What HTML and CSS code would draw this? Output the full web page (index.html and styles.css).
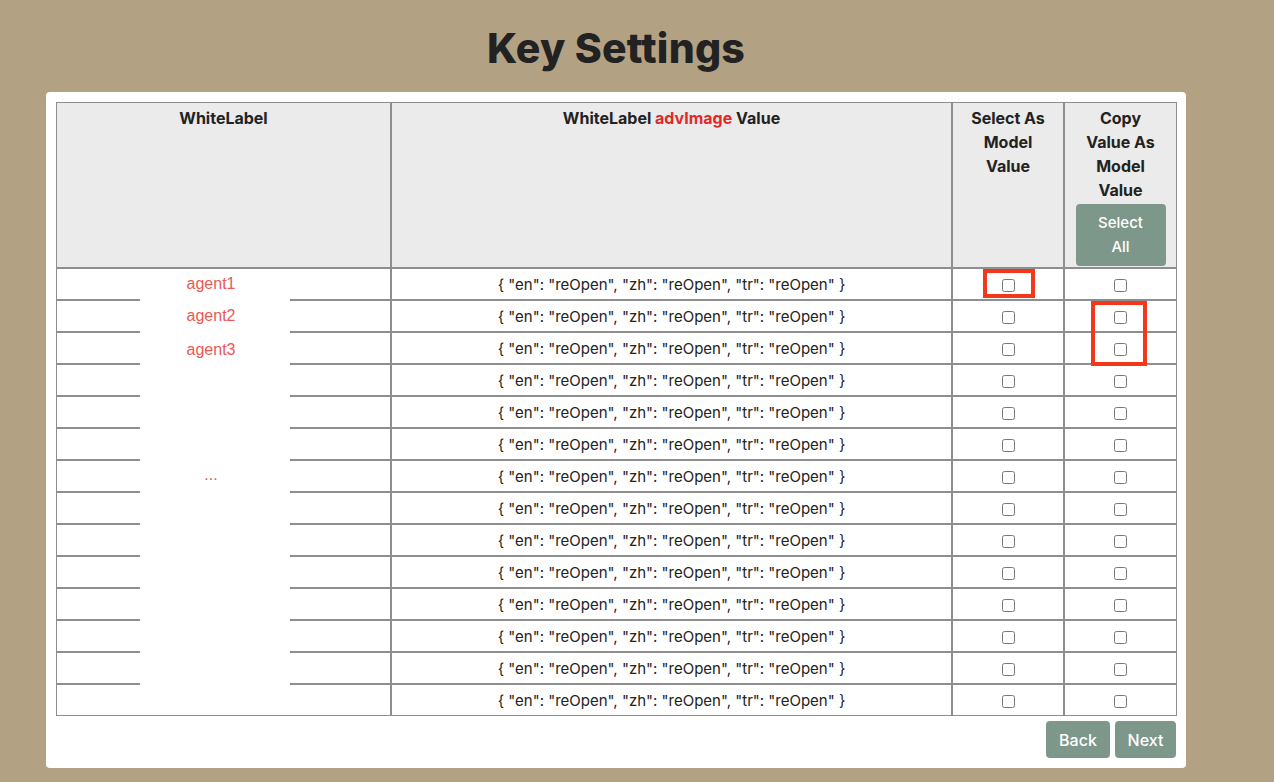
FILE: index.html
```html
<!DOCTYPE html>
<html lang="en">
<head>
<meta charset="utf-8">
<title>Key Settings</title>
<link rel="stylesheet" href="styles.css">
</head>
<body>
<div class="page">
  <h1 class="title">Key Settings</h1>
  <div class="card">
    <div class="table-wrap">
      <table class="grid">
        <colgroup>
          <col class="c1"><col class="c2"><col class="c3"><col class="c4">
        </colgroup>
        <thead>
          <tr>
            <th>WhiteLabel</th>
            <th>WhiteLabel <span class="hl">advImage</span> Value</th>
            <th>Select As<br>Model<br>Value</th>
            <th>Copy<br>Value As<br>Model<br>Value<button class="btn select-all" type="button">Select<br>All</button></th>
          </tr>
        </thead>
        <tbody id="rows"></tbody>
      </table>
      <div class="labels">
        <div class="lbl l1">agent1</div>
        <div class="lbl">agent2</div>
        <div class="lbl">agent3</div>
        <div class="lbl dots">...</div>
      </div>
      <div class="mark mark1"></div>
      <div class="mark mark2"></div>
    </div>
    <div class="actions">
      <button class="btn nav" type="button">Back</button>
      <button class="btn nav" type="button">Next</button>
    </div>
  </div>
</div>
<script>
  var tb = document.getElementById('rows');
  var html = '';
  for (var i = 0; i < 14; i++) {
    html += '<tr><td></td><td class="val">{ "en": "reOpen", "zh": "reOpen", "tr": "reOpen" }</td>' +
            '<td class="chk"><input type="checkbox"></td><td class="chk"><input type="checkbox"></td></tr>';
  }
  tb.innerHTML = html;
</script>
</body>
</html>
```

FILE: styles.css
```css
html, body {
  margin: 0;
  padding: 0;
  background: #b2a183;
  font-family: "Inter", "Open Sans", sans-serif;
  color: #222;
}
.page {
  width: 1140px;
  margin-left: 46px;
  padding-top: 22px;
}
.title {
  margin: 0 0 18px;
  height: 52px;
  line-height: 52px;
  text-align: center;
  font-size: 41px;
  font-weight: 800;
  color: #222;
  letter-spacing: 0.2px;
}
.card {
  background: #fff;
  border-radius: 4px;
  padding: 10px 10px 10px;
}
.table-wrap {
  position: relative;
}
.grid {
  width: 1120px;
  table-layout: fixed;
  border-collapse: separate;
  border-spacing: 0;
  border: 1px solid #8e8e8e;
}
.c1 { width: 335px; }
.c2 { width: 561px; }
.c3 { width: 112px; }
.c4 { width: 111px; }
.grid th, .grid td {
  border-right: 2px solid #8e8e8e;
  border-bottom: 2px solid #8e8e8e;
  padding: 0;
}
.grid th:last-child, .grid td:last-child { border-right: 0; }
.grid tbody tr:last-child td { border-bottom: 0; }
.grid th {
  background: #ebebeb;
  height: 161px;
  vertical-align: top;
  padding-top: 3px;
  font-size: 16px;
  font-weight: 700;
  line-height: 24px;
  text-align: center;
}
.hl { color: #e02a2a; }
.grid td {
  height: 30px;
  text-align: center;
  font-size: 15px;
}
.val { color: #222; }
.chk input {
  margin: 0;
  width: 13px;
  height: 13px;
  vertical-align: middle;
}
.btn {
  border: 0;
  background: #7e978b;
  color: #fff;
  font-family: "Inter", "Open Sans", sans-serif;
  font-size: 15px;
  border-radius: 4px;
  cursor: pointer;
}
.select-all {
  display: block;
  margin: 2px auto 0;
  width: 90px;
  height: 62px;
  line-height: 24px;
  padding: 0;
  font-weight: 500;
}
.labels {
  position: absolute;
  left: 84px;
  top: 167px;
  width: 150px;
  bottom: 2px;
  background: #fff;
  font-family: "Liberation Sans", Arial, sans-serif;
  color: #ec5853;
  font-size: 16px;
  text-align: center;
}
.lbl {
  height: 33.5px;
  line-height: 33.5px;
  padding-right: 8px;
}
.lbl.l1 { height: 30px; line-height: 30px; }
.dots { margin-top: 92px; }
.mark {
  position: absolute;
  border: 4px solid #f2371b;
  box-sizing: border-box;
}
.mark1 { left: 927px; top: 167px; width: 52px; height: 29px; }
.mark2 { left: 1035px; top: 199px; width: 56px; height: 65px; }
.actions {
  display: flex;
  justify-content: flex-end;
  gap: 5px;
  margin-top: 5px;
}
.nav {
  height: 37px;
  padding: 0 10px;
  font-size: 16px;
  font-weight: 500;
}
.nav:first-child { width: 64px; }
.nav:last-child { width: 61px; }
```
